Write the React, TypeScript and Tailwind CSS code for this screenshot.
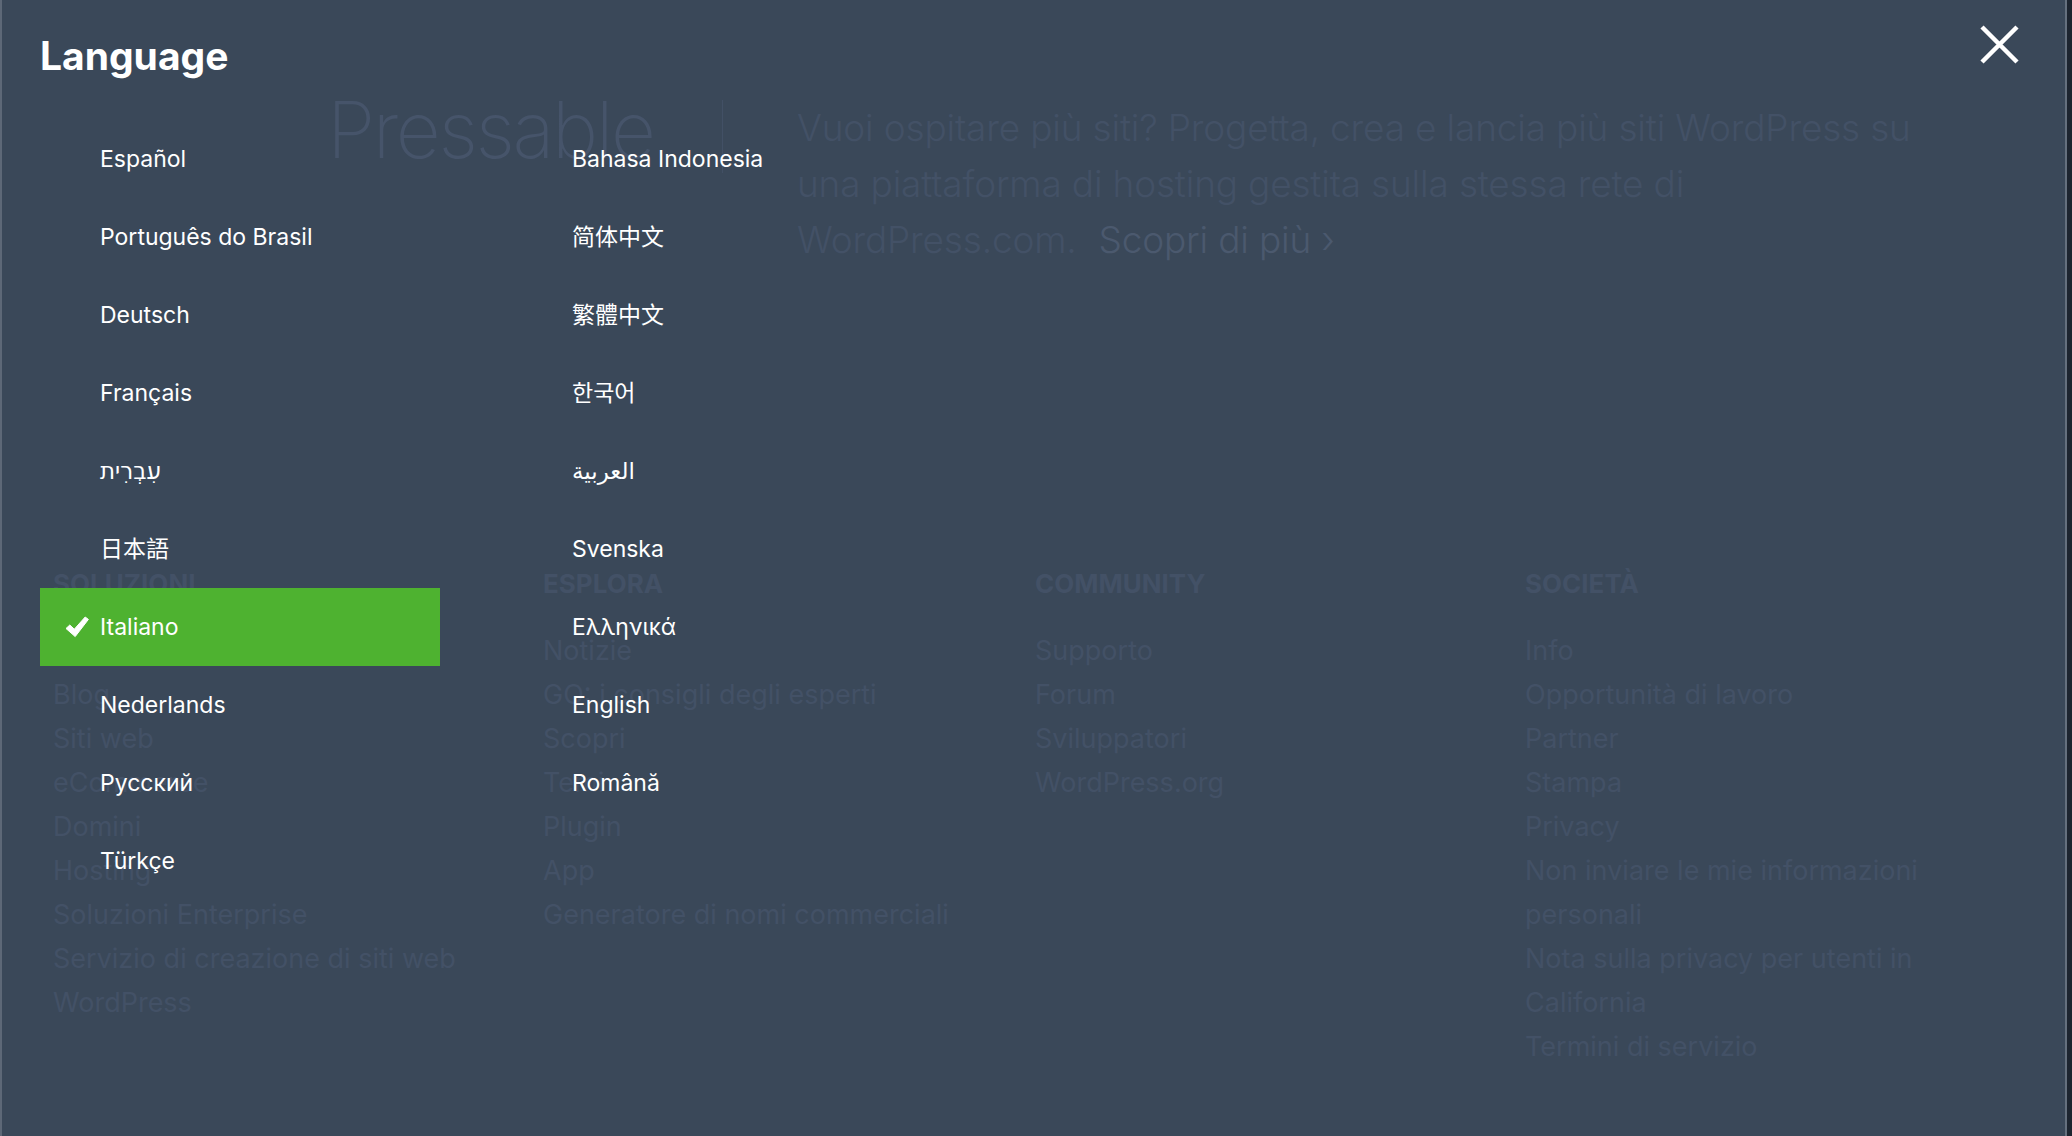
import React from "react";

const sans = "font-['Inter','Noto_Sans','Noto_Sans_CJK_SC','DejaVu_Sans',sans-serif]";

const leftLangs = [
  "Español",
  "Português do Brasil",
  "Deutsch",
  "Français",
  "עִבְרִית",
  "日本語",
  "Italiano",
  "Nederlands",
  "Русский",
  "Türkçe",
];

const rightLangs = [
  "Bahasa Indonesia",
  "简体中文",
  "繁體中文",
  "한국어",
  "العربية",
  "Svenska",
  "Ελληνικά",
  "English",
  "Română",
];

const footer = [
  {
    title: "Soluzioni",
    items: [
      "Panoramica",
      "Blog",
      "Siti web",
      "eCommerce",
      "Domini",
      "Hosting",
      "Soluzioni Enterprise",
      "Servizio di creazione di siti web",
      "WordPress",
    ],
  },
  {
    title: "Esplora",
    items: [
      "Notizie",
      "GO: i consigli degli esperti",
      "Scopri",
      "Temi",
      "Plugin",
      "App",
      "Generatore di nomi commerciali",
    ],
  },
  {
    title: "Community",
    items: ["Supporto", "Forum", "Sviluppatori", "WordPress.org"],
  },
  {
    title: "Società",
    items: [
      "Info",
      "Opportunità di lavoro",
      "Partner",
      "Stampa",
      "Privacy",
      "Non inviare le mie informazioni personali",
      "Nota sulla privacy per utenti in California",
      "Termini di servizio",
    ],
  },
];

function Check() {
  return (
    <svg width="24" height="22" viewBox="0 0 24 22" className="shrink-0">
      <path
        d="M1 12.5 L4.8 9 L9.3 13.2 L20.2 1 L23.4 3.4 L10.2 20.6 Z"
        fill="white"
        stroke="white"
        strokeWidth="1"
        strokeLinejoin="round"
      />
    </svg>
  );
}

function LangItem({ label, active }: { label: string; active?: boolean }) {
  return (
    <div
      className={`flex items-center h-[78px] w-[400px] pl-[25px] ${active ? "bg-[#4eb230]" : ""}`}
    >
      <div className="w-[24px] flex items-center">{active && <Check />}</div>
      <span className="ml-[11px] text-[23px] leading-none text-white">{label}</span>
    </div>
  );
}

export default function App() {
  return (
    <div className={`flex w-full h-[1136px] bg-[#1d2530] overflow-hidden ${sans}`}>
      <div className="relative w-[2067px] h-full bg-[#3a4859] border-l-2 border-r-2 border-l-[#5d6877] border-r-[#65707e]">
        {/* page content behind the overlay */}
        <div className="pt-[91px]">
          <div className="flex pl-[325px]">
            <div className="w-[395px] text-[78px] leading-none font-extralight tracking-[-0.03em] text-[#46546a]">
              Pressable
            </div>
            <div className="mt-[9px] w-px h-[73px] bg-[#425065]" />
            <p className="ml-[74px] mt-[9px] text-[37px] leading-[56px] font-light text-[#435166] tracking-[-0.005em]">
              Vuoi ospitare più siti? Progetta, crea e lancia più siti WordPress su
              <br />
              una piattaforma di hosting gestita sulla stessa rete di
              <br />
              WordPress.com.
              <span className="ml-[22px] text-[#4b596e]">Scopri di più ›</span>
            </p>
          </div>

          <div className="mt-[300px] pl-[51px] grid grid-cols-[490px_492px_490px_1fr]">
            {footer.map((col) => (
              <div key={col.title}>
                <h4 className="text-[26px] leading-[32px] font-bold uppercase text-[#435166]">
                  {col.title}
                </h4>
                <ul className="mt-[29px] w-[440px]">
                  {col.items.map((it) => (
                    <li key={it} className="text-[27px] leading-[44px] text-[#435166]">
                      {it}
                    </li>
                  ))}
                </ul>
              </div>
            ))}
          </div>
        </div>

        {/* language overlay */}
        <div className="absolute inset-0">
          <h2 className="pl-[38px] pt-[36px] text-[39px] leading-none font-bold text-white">
            Language
          </h2>
          <button className="absolute top-[25px] right-[46px] w-[39px] h-[39px]">
            <svg width="39" height="39" viewBox="0 0 39 39">
              <path d="M2 2 L37 37 M37 2 L2 37" stroke="white" strokeWidth="4.5" />
            </svg>
          </button>
          <div className="mt-[45px] ml-[38px] grid grid-flow-col grid-rows-[repeat(10,78px)] grid-cols-[400px_400px] gap-x-[72px]">
            {leftLangs.map((l) => (
              <LangItem key={l} label={l} active={l === "Italiano"} />
            ))}
            {rightLangs.map((l) => (
              <LangItem key={l} label={l} />
            ))}
          </div>
        </div>
      </div>
    </div>
  );
}
